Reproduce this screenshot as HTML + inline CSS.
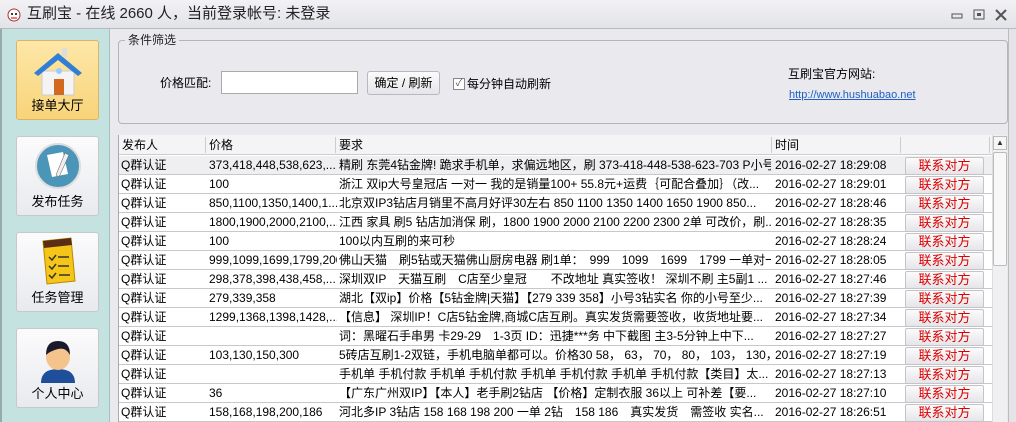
<!DOCTYPE html>
<html><head><meta charset="utf-8"><style>
*{margin:0;padding:0;box-sizing:border-box}
body{width:1016px;height:422px;overflow:hidden;background:#e9e9ee;font-family:"Liberation Sans","Noto Sans CJK SC",sans-serif;font-size:12px;color:#000;position:relative}
.a{position:absolute}
#title{left:0;top:0;width:1016px;height:29px;background:linear-gradient(#f2f2f5,#e2e3e8);border-bottom:1px solid #b8b8c0}
#title span{position:absolute;left:27px;top:4px;font-size:15px;color:#222;line-height:20px}
#side{left:0;top:29px;width:110px;height:393px;background:#c3e2e0;border-left:2px solid #9aa;border-right:1px solid #a8c0c0}
.btn{position:absolute;left:14px;width:83px;height:80px;border:1px solid #c8c8c8;border-radius:3px;background:linear-gradient(#fbfbfc,#e9eaee);text-align:center}
.btn b{position:absolute;bottom:5px;left:0;right:0;font-weight:normal;font-size:13px;line-height:16px}
#grp{left:118px;top:40px;width:890px;height:84px;border:1px solid #b4b4bc;border-radius:4px}
#grp .lg{position:absolute;left:6px;top:-9px;background:#e9e9ee;padding:0 3px;color:#222;line-height:16px}
#tbl{left:118px;top:135px;width:874px;height:287px;background:#fff;border-left:1px solid #aaa}
.hd{position:absolute;top:0;height:20px;background:#f4f4f6;border-bottom:1px solid #ccc;width:874px}
.hd span{position:absolute;top:2px;border-right:1px solid #ccc;height:16px;padding-left:3px;line-height:16px}
.row{position:absolute;left:0;width:874px;height:19px;border-bottom:1px solid #c8c8c8;white-space:nowrap;line-height:18px}
.row span{position:absolute;top:0;height:18px;overflow:hidden;line-height:18px}
.row .c1{left:2px}.row .c2{left:90px;width:128px}.row .c3{left:220px;width:432px}.row .c4{left:656px}
.row i{position:absolute;left:786px;top:1px;width:79px;height:18px;border:1px solid #c4c4c8;border-radius:2px;background:linear-gradient(#fbfbfb,#e6e6ea);color:#d00;font-style:normal;text-align:center;line-height:16px;font-size:13px}
#sb{left:992px;top:135px;width:15px;height:287px;background:#f0f0f2;border-left:1px solid #ddd}
</style></head><body>
<div id="title" class="a"><svg class="a" style="left:6px;top:7px" width="16" height="16"><circle cx="8" cy="8" r="6" fill="#fff" stroke="#a33"/><circle cx="6" cy="7" r="1" fill="#000"/><circle cx="10" cy="7" r="1" fill="#000"/><path d="M5 11h6" stroke="#c00"/></svg><span>互刷宝 - 在线 2660 人，当前登录帐号: 未登录</span>
<svg class="a" style="left:950px;top:8px" width="60" height="14"><rect x="2" y="6" width="10" height="4" fill="none" stroke="#555"/><rect x="24" y="2" width="10" height="9" fill="none" stroke="#555"/><rect x="27" y="5" width="4" height="3" fill="#555"/><path d="M46 2l10 10M56 2L46 12" stroke="#555" stroke-width="2"/></svg></div>
<div id="side" class="a">
<div class="btn" style="top:11px;background:linear-gradient(#fde7a8,#f8d479);border-color:#d9b46a"><svg width="60" height="55" style="margin-top:4px"><path d="M14 26h32v24H14z" fill="#f4f4f4" stroke="#ccc"/><path d="M6 28L30 8l24 20-4 3L30 15 10 31z" fill="#2f7fd6"/><rect x="34" y="3" width="5" height="9" fill="#ddd"/><rect x="26" y="34" width="10" height="16" fill="#d2691e"/><circle cx="31" cy="26" r="3" fill="#9cf"/></svg><b>接单大厅</b></div>
<div class="btn" style="top:107px"><svg width="50" height="50" style="margin-top:4px"><circle cx="25" cy="25" r="22" fill="#4b95b8" stroke="#ddd" stroke-width="2"/><path d="M14 14l16-3 5 22-16 3z" fill="#fff"/><path d="M32 12l4 2-10 22-3-2z" fill="#eee" stroke="#555" stroke-width=".5"/></svg><b>发布任务</b></div>
<div class="btn" style="top:203px"><svg width="50" height="55" style="margin-top:2px"><path d="M10 6l28-3 4 43-28 3z" fill="#f5c518" stroke="#b88a00"/><path d="M10 6l28-3 1 7-28 3z" fill="#5a2e15"/><path d="M16 22l3 3 4-5M16 31l3 3 4-5M16 40l3 3 4-5M25 22h11M25 31h11M26 40h11" stroke="#333" stroke-width="1.5" fill="none"/></svg><b>任务管理</b></div>
<div class="btn" style="top:299px"><svg width="50" height="55" style="margin-top:2px"><path d="M8 52q0-14 17-14t17 14z" fill="#1f4f9a"/><ellipse cx="25" cy="26" rx="12" ry="13" fill="#f5c48c"/><path d="M13 24q0-14 12-14t12 14q-4-8-12-6t-12 6z" fill="#1a1a2a"/></svg><b>个人中心</b></div>
</div>
<div id="grp" class="a"><span class="lg">条件筛选</span>
<span class="a" style="left:41px;top:34px;line-height:16px">价格匹配:</span>
<div class="a" style="left:102px;top:30px;width:137px;height:23px;background:#fff;border:1px solid #aaa"></div>
<div class="a" style="left:248px;top:30px;width:73px;height:24px;border:1px solid #b8b8c0;border-radius:3px;background:linear-gradient(#fbfbfb,#e6e6ea);text-align:center;line-height:22px">确定 / 刷新</div>
<div class="a" style="left:334px;top:37px;width:12px;height:12px;border:1px solid #888;background:#fff;font-size:10px;line-height:10px;text-align:center;color:#555">✓</div>
<span class="a" style="left:348px;top:35px;line-height:16px">每分钟自动刷新</span>
<span class="a" style="left:669px;top:25px;line-height:16px">互刷宝官方网站:</span>
<span class="a" style="left:670px;top:47px;color:#1f5fc8;text-decoration:underline;font-size:11px;line-height:14px">http://www.hushuabao.net</span>
</div>
<div id="tbl" class="a">
<div class="hd"><span style="left:0;width:87px">发布人</span><span style="left:87px;width:130px">价格</span><span style="left:217px;width:436px">要求</span><span style="left:653px;width:129px">时间</span><span style="left:782px;width:89px"></span></div>
<div class="row" style="top:21px;background:#efeff1"><span class="c1">Q群认证</span><span class="c2">373,418,448,538,623,...</span><span class="c3">精刷 东莞4钻金牌! 跪求手机单，求偏远地区，刷 373-418-448-538-623-703 P小号...</span><span class="c4">2016-02-27 18:29:08</span><i>联系对方</i></div>
<div class="row" style="top:40px"><span class="c1">Q群认证</span><span class="c2">100</span><span class="c3">浙江 双ip大号皇冠店 一对一 我的是销量100+ 55.8元+运费｛可配合叠加｝（改...</span><span class="c4">2016-02-27 18:29:01</span><i>联系对方</i></div>
<div class="row" style="top:59px"><span class="c1">Q群认证</span><span class="c2">850,1100,1350,1400,1...</span><span class="c3">北京双IP3钻店月销里不高月好评30左右 850 1100 1350 1400 1650 1900 850...</span><span class="c4">2016-02-27 18:28:46</span><i>联系对方</i></div>
<div class="row" style="top:78px"><span class="c1">Q群认证</span><span class="c2">1800,1900,2000,2100,...</span><span class="c3">江西 家具 刷5 钻店加消保 刷，1800 1900 2000 2100 2200 2300 2单 可改价，刷...</span><span class="c4">2016-02-27 18:28:35</span><i>联系对方</i></div>
<div class="row" style="top:97px"><span class="c1">Q群认证</span><span class="c2">100</span><span class="c3">100以内互刷的来可秒</span><span class="c4">2016-02-27 18:28:24</span><i>联系对方</i></div>
<div class="row" style="top:116px"><span class="c1">Q群认证</span><span class="c2">999,1099,1699,1799,200</span><span class="c3">佛山天猫　刷5钻或天猫佛山厨房电器 刷1单：　999　1099　1699　1799 一单对一...</span><span class="c4">2016-02-27 18:28:05</span><i>联系对方</i></div>
<div class="row" style="top:135px"><span class="c1">Q群认证</span><span class="c2">298,378,398,438,458,...</span><span class="c3">深圳双IP　天猫互刷　C店至少皇冠　　不改地址 真实签收！ 深圳不刷 主5副1 ...</span><span class="c4">2016-02-27 18:27:46</span><i>联系对方</i></div>
<div class="row" style="top:154px"><span class="c1">Q群认证</span><span class="c2">279,339,358</span><span class="c3">湖北【双ip】价格【5钻金牌|天猫】【279 339 358】小号3钻实名 你的小号至少...</span><span class="c4">2016-02-27 18:27:39</span><i>联系对方</i></div>
<div class="row" style="top:173px"><span class="c1">Q群认证</span><span class="c2">1299,1368,1398,1428,...</span><span class="c3">【信息】 深圳IP！C店5钻金牌,商城C店互刷。真实发货需要签收，收货地址要...</span><span class="c4">2016-02-27 18:27:34</span><i>联系对方</i></div>
<div class="row" style="top:192px"><span class="c1">Q群认证</span><span class="c2"></span><span class="c3">词：黑曜石手串男 卡29-29　1-3页 ID：迅捷***务 中下截图 主3-5分钟上中下...</span><span class="c4">2016-02-27 18:27:27</span><i>联系对方</i></div>
<div class="row" style="top:211px"><span class="c1">Q群认证</span><span class="c2">103,130,150,300</span><span class="c3">5砖店互刷1-2双链，手机电脑单都可以。价格30 58， 63， 70， 80， 103， 130，...</span><span class="c4">2016-02-27 18:27:19</span><i>联系对方</i></div>
<div class="row" style="top:230px"><span class="c1">Q群认证</span><span class="c2"></span><span class="c3">手机单 手机付款 手机单 手机付款 手机单 手机付款 手机单 手机付款【类目】太...</span><span class="c4">2016-02-27 18:27:13</span><i>联系对方</i></div>
<div class="row" style="top:249px"><span class="c1">Q群认证</span><span class="c2">36</span><span class="c3">【广东广州双IP】【本人】老手刷2钻店 【价格】定制衣服 36以上 可补差【要...</span><span class="c4">2016-02-27 18:27:10</span><i>联系对方</i></div>
<div class="row" style="top:268px"><span class="c1">Q群认证</span><span class="c2">158,168,198,200,186</span><span class="c3">河北多IP 3钻店 158 168 198 200 一单 2钻　158 186　真实发货　需签收 实名...</span><span class="c4">2016-02-27 18:26:51</span><i>联系对方</i></div>
</div>
<div id="sb" class="a"><div class="a" style="left:0;top:1px;width:14px;height:14px;border:1px solid #bbb;background:#f6f6f6;text-align:center;font-size:8px;line-height:12px;color:#333">▲</div><div class="a" style="left:0;top:17px;width:14px;height:114px;border:1px solid #bbb;border-radius:2px;background:#f8f8f8"></div></div>
<div class="a" style="left:1008px;top:29px;width:8px;height:393px;background:#e4e4e8;border-left:1px solid #bbb"></div>
</body></html>
